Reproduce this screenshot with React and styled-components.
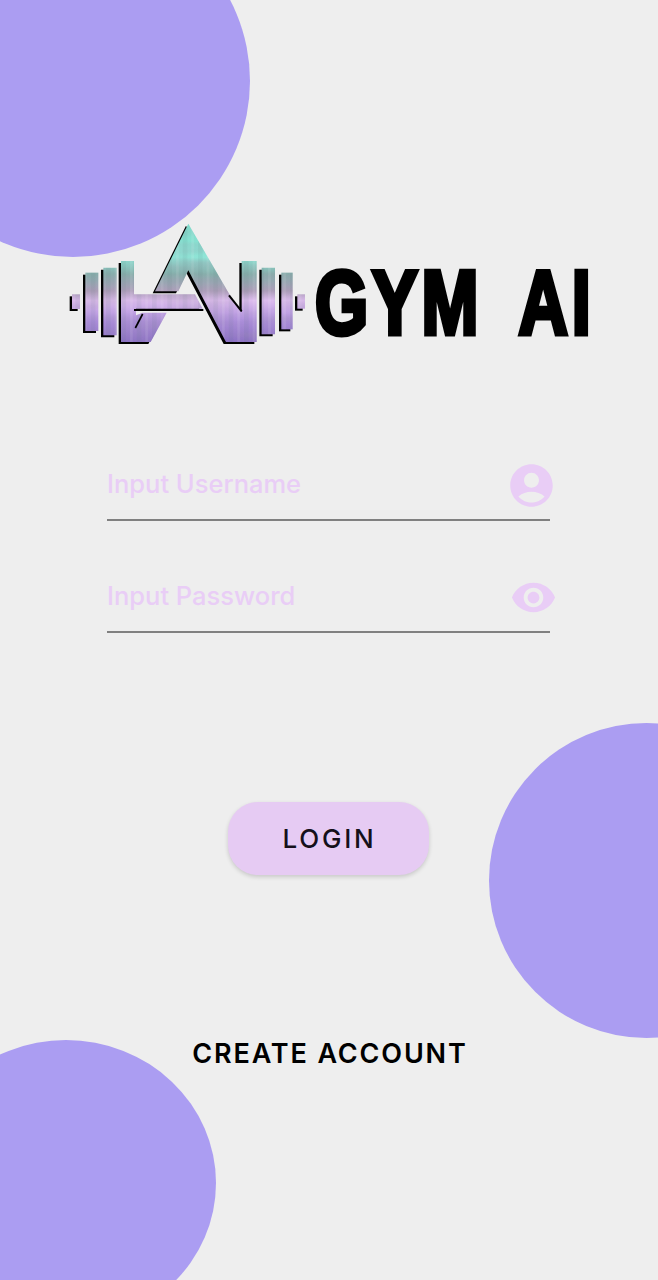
import React from 'react';
import styled, { createGlobalStyle } from 'styled-components';
import { MdAccountCircle, MdVisibility } from 'react-icons/md';

const GlobalStyle = createGlobalStyle`
  html, body {
    margin: 0;
    padding: 0;
  }
  * {
    box-sizing: border-box;
  }
`;

const Page = styled.div`
  position: relative;
  width: 658px;
  height: 1280px;
  overflow: hidden;
  background: #eeeeee;
  font-family: Inter, "Liberation Sans", sans-serif;
  display: flex;
  flex-direction: column;
  align-items: center;
`;

const Blob = styled.div`
  position: absolute;
  border-radius: 50%;
  background: #ab9df2;
  left: ${(p) => p.$left}px;
  top: ${(p) => p.$top}px;
  width: ${(p) => p.$w}px;
  height: ${(p) => p.$h}px;
`;

const Brand = styled.div`
  position: relative;
  width: 658px;
  height: 125px;
  margin-top: 222px;
  padding-left: 68px;
  display: flex;
  align-items: center;
`;

const BrandName = styled.div`
  margin-left: 7px;
  margin-top: 36px;
  width: 276px;
  white-space: nowrap;
  font-family: "Liberation Sans", Arial, sans-serif;
  font-weight: 700;
  font-size: 90px;
  line-height: 90px;
  letter-spacing: 5px;
  word-spacing: 21px;
  color: #000;
  -webkit-text-stroke: 5px #000;
  transform: scaleX(0.76);
  transform-origin: left center;
`;

const Form = styled.form`
  position: relative;
  align-self: flex-start;
  width: 443px;
  margin-top: 116px;
  margin-left: 107px;
  display: flex;
  flex-direction: column;
  gap: 54px;
`;

const Field = styled.label`
  display: flex;
  align-items: center;
  height: 58px;
  border-bottom: 2px solid #808080;
  padding-bottom: 12px;
  color: #e9cdf6;
`;

const TextInput = styled.input`
  flex: 1;
  min-width: 0;
  border: 0;
  outline: 0;
  padding: 0;
  margin-bottom: 4px;
  background: transparent;
  font-family: inherit;
  font-size: 25.5px;
  font-weight: 500;
  &::placeholder {
    color: #e9cdf6;
    opacity: 1;
  }
`;

const FieldIcon = styled.span`
  display: flex;
  margin-right: ${(p) => p.$inset}px;
`;

const LoginButton = styled.button`
  position: relative;
  width: 201px;
  height: 73px;
  margin-top: 169px;
  margin-right: 1px;
  padding: 0 0 0 2px;
  border: 0;
  border-radius: 30px;
  background: #e6cbf3;
  box-shadow: 0 2px 4px rgba(0, 0, 0, 0.16);
  color: #15101a;
  font-family: inherit;
  font-size: 26px;
  font-weight: 500;
  letter-spacing: 2.8px;
`;

const CreateLink = styled.a`
  position: relative;
  margin-top: 161px;
  margin-left: 2px;
  color: #000;
  font-size: 27px;
  line-height: 36px;
  font-weight: 600;
  letter-spacing: 1.85px;
`;

function LogoMark() {
  return (
    <svg width="240" height="125" viewBox="24 20 720 375" aria-hidden="true">
      <defs>
        <linearGradient id="metal" gradientUnits="userSpaceOnUse" x1="0" y1="25" x2="0" y2="385">
          <stop offset="0" stopColor="#7fdccb" />
          <stop offset="0.28" stopColor="#8fe4d6" />
          <stop offset="0.42" stopColor="#86b0ac" />
          <stop offset="0.56" stopColor="#ad9eba" />
          <stop offset="0.64" stopColor="#dcbcee" />
          <stop offset="0.82" stopColor="#aa8cda" />
          <stop offset="1" stopColor="#8a6fc4" />
        </linearGradient>
        <pattern id="stripes" patternUnits="userSpaceOnUse" width="46" height="10">
          <rect x="0" width="14" height="10" fill="#3d5f6a" opacity="0.08" />
          <rect x="26" width="8" height="10" fill="#ffffff" opacity="0.1" />
        </pattern>
        <filter id="grain" x="0" y="0" width="100%" height="100%">
          <feTurbulence type="fractalNoise" baseFrequency="0.006 0.03" numOctaves="2" seed="4" />
          <feColorMatrix values="0 0 0 0 0.35  0 0 0 0 0.3  0 0 0 0 0.4  1.6 0 0 0 -0.55" />
        </filter>
        <g id="plates">
          <path d="M36 237h24v44H36z" />
          <path d="M76 172h39v175H76z" />
          <path d="M130 157h40v203h-40z" />
          <path d="M183 137h39v100h183l23 43H228v20l20-8h72l-48 88h-89z" />
          <path d="M605 157h40v200h-40z" />
          <path d="M664 172h34v170h-34z" />
          <path d="M712 237h23v43h-23z" />
          <path d="M385 25 510 240l35 50V137h45v243h-92L385 165l-30 63h-70z" />
        </g>
        <mask id="platesMask" maskUnits="userSpaceOnUse" x="24" y="20" width="720" height="375">
          <use href="#plates" fill="#fff" />
        </mask>
      </defs>
      <use href="#plates" x="-7" y="6" fill="#000" />
      <use href="#plates" fill="url(#metal)" />
      <g mask="url(#platesMask)">
        <rect x="24" y="20" width="720" height="375" fill="url(#stripes)" />
        <rect x="24" y="20" width="720" height="375" filter="url(#grain)" opacity="0.3" />
      </g>
      <path d="M222 284h208" stroke="#000" strokeWidth="6" fill="none" />
      <path d="M226 338 248 296" stroke="#000" strokeWidth="5" fill="none" />
      <path d="M507 240 545 288" stroke="#000" strokeWidth="6" fill="none" />
    </svg>
  );
}

export default function App() {
  return (
    <Page>
      <GlobalStyle />
      <Blob $left={-104} $top={-95} $w={354} $h={352} />
      <Blob $left={489} $top={723} $w={315} $h={315} />
      <Blob $left={-84} $top={1040} $w={300} $h={286} />

      <Brand>
        <LogoMark />
        <BrandName>GYM AI</BrandName>
      </Brand>

      <Form>
        <Field>
          <TextInput placeholder="Input Username" />
          <FieldIcon $inset={-7}>
            <MdAccountCircle size={51} />
          </FieldIcon>
        </Field>
        <Field>
          <TextInput placeholder="Input Password" />
          <FieldIcon $inset={-7}>
            <MdVisibility size={47} />
          </FieldIcon>
        </Field>
      </Form>

      <LoginButton type="button">LOGIN</LoginButton>
      <CreateLink>CREATE ACCOUNT</CreateLink>
    </Page>
  );
}
